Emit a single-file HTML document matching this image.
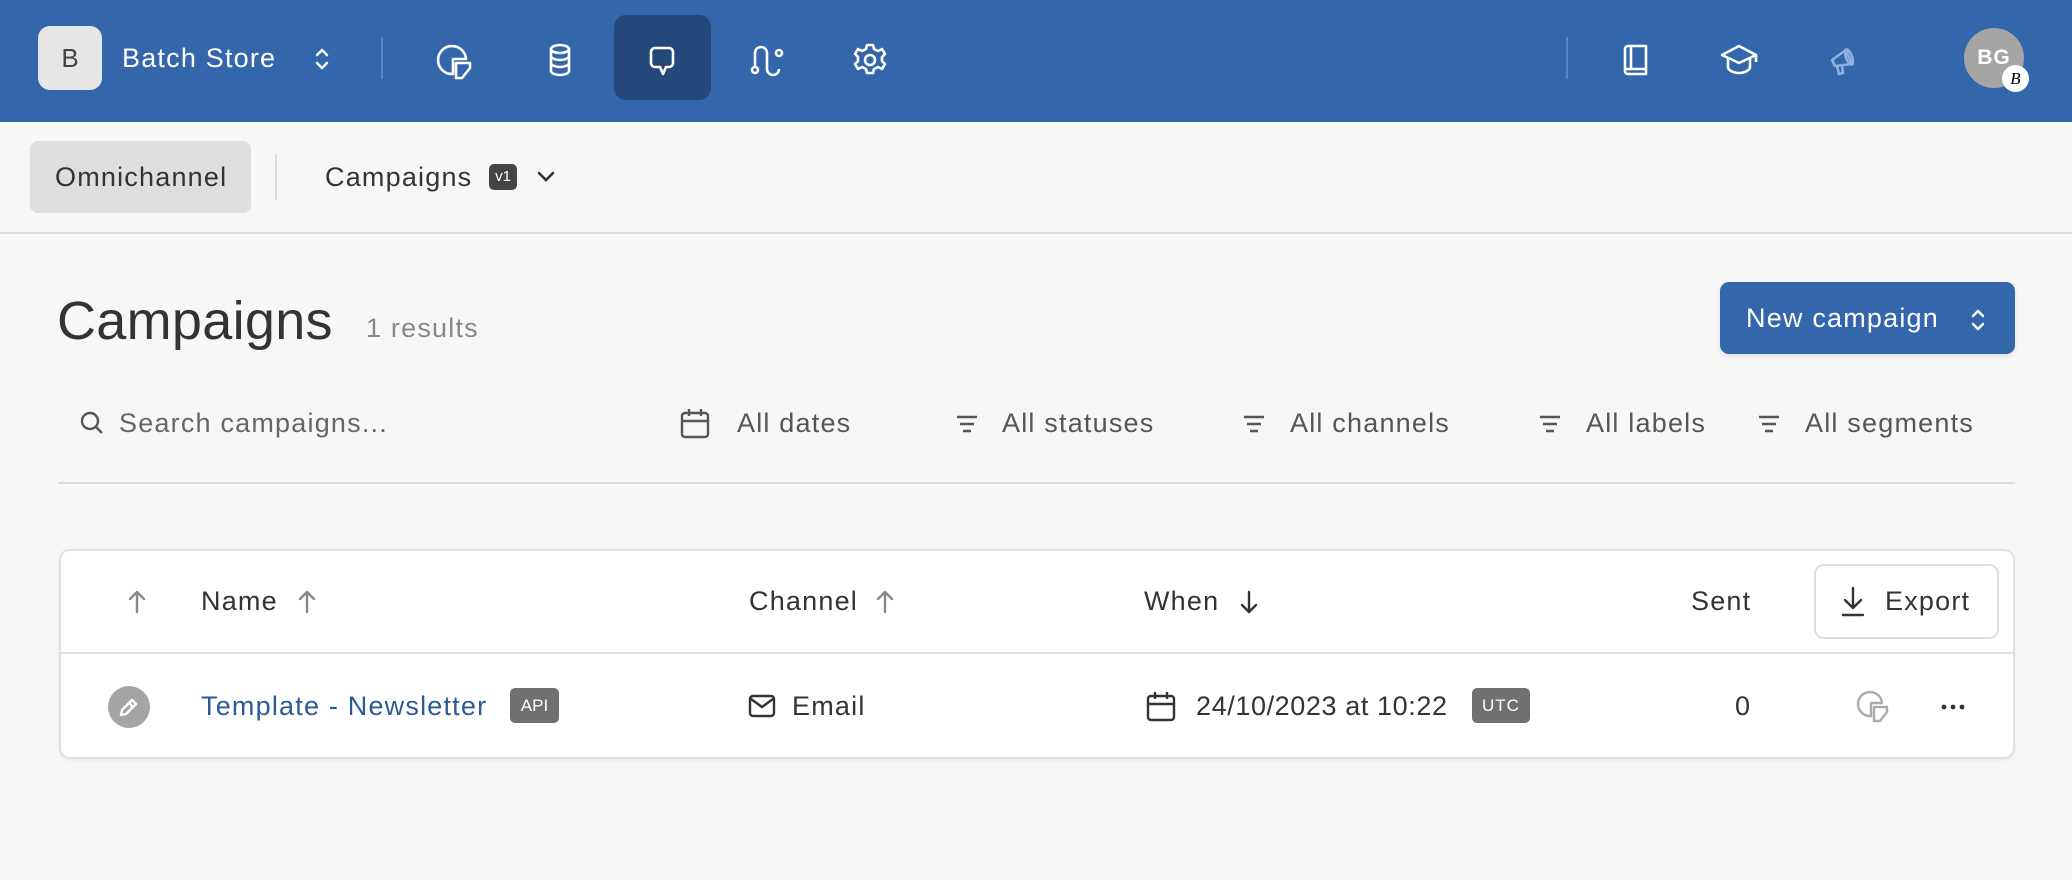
<!DOCTYPE html>
<html><head><meta charset="utf-8"><style>
*{margin:0;padding:0;box-sizing:border-box}
body{width:2072px;height:880px;background:#f7f7f7;font-family:"Liberation Sans",sans-serif;position:relative;overflow:hidden;color:#333}
.a{position:absolute}
.t{position:absolute;white-space:nowrap;line-height:40px;font-size:27px;letter-spacing:1.2px}
svg{position:absolute;overflow:visible}
</style></head><body>
<div class="a" style="left:0;top:0;width:2072px;height:122px;background:#3366aa"></div>
<div class="a" style="left:38px;top:26px;width:64px;height:64px;border-radius:12px;background:#e6e6e6;color:#444;font-size:26px;line-height:64px;text-align:center">B</div>
<div class="t" style="left:122px;top:38px;color:#fff">Batch Store</div>
<svg style="left:313px;top:46px" width="18" height="26" fill="none" stroke="#fff" stroke-width="2.5" stroke-linecap="round" stroke-linejoin="round"><path d="M4 9l5-5 5 5M4 17l5 5 5-5"/></svg>
<div class="a" style="left:381px;top:37px;width:2px;height:42px;background:#5a85c0"></div>
<div class="a" style="left:614px;top:15px;width:97px;height:85px;border-radius:12px;background:#24487a"></div>
<svg style="left:436px;top:42px" width="40" height="40" fill="none" stroke="#fff" stroke-width="2.6" stroke-linejoin="round"><path d="M17 32 A14 14 0 1 1 30 17 L17 17 Z"/><path d="M20 21 H34 V26 L26 36 H20 Z"/></svg>
<svg style="left:548px;top:44px" width="24" height="32" fill="none" stroke="#fff" stroke-width="2.6"><ellipse cx="12" cy="5" rx="9" ry="4"/><path d="M3 5v22c0 2 4 4 9 4s9-2 9-4V5M3 12c0 2 4 4 9 4s9-2 9-4M3 19c0 2 4 4 9 4s9-2 9-4"/></svg>
<svg style="left:648px;top:45px" width="30" height="34" fill="none" stroke="#fff" stroke-width="2.6" stroke-linejoin="round"><path d="M7 3h14a4 4 0 0 1 4 4v11a4 4 0 0 1-4 4h-3l-3 7l-3-7H7a4 4 0 0 1-4-4V7a4 4 0 0 1 4-4z"/></svg>
<svg style="left:750px;top:44px" width="34" height="34" fill="none" stroke="#fff" stroke-width="2.6"><circle cx="5" cy="26" r="3"/><circle cx="29" cy="9" r="3"/><path d="M5 23V9a6 6 0 0 1 12 0v16a6 6 0 0 0 12 0"/></svg>
<svg style="left:852px;top:42px" width="36" height="36" fill="none" stroke="#fff" stroke-width="2.6" stroke-linejoin="round"><circle cx="18" cy="18" r="5"/><path d="M15 3h6l1 4 4 2 4-2 3 5-3 3v4l3 3-3 5-4-2-4 2-1 4h-6l-1-4-4-2-4 2-3-5 3-3v-4l-3-3 3-5 4 2 4-2z"/></svg>
<div class="a" style="left:1566px;top:37px;width:2px;height:42px;background:#5a85c0"></div>
<svg style="left:1622px;top:44px" width="28" height="32" fill="none" stroke="#fff" stroke-width="2.6" stroke-linejoin="round"><path d="M3 26V5a3 3 0 0 1 3-3h18v28H6a3 3 0 0 1-3-3zM3 25h21M9 2v23"/></svg>
<svg style="left:1720px;top:44px" width="38" height="32" fill="none" stroke="#fff" stroke-width="2.6" stroke-linejoin="round"><path d="M19 2L2 11l17 8 17-8zM8 14v9c0 3 5 6 11 6s11-3 11-6v-9M36 11v7"/></svg>
<svg style="left:1829px;top:44px" width="30" height="32" fill="none" stroke="#8fb0dc" stroke-width="2.6" stroke-linejoin="round"><path d="M3 16l14-10 6 14-17 2z M8 22l2 8 4-1-1-7"/><ellipse cx="20" cy="13" rx="3" ry="8" transform="rotate(-20 20 13)"/></svg>
<div class="a" style="left:1964px;top:28px;width:60px;height:60px;border-radius:50%;background:#a5a5a5;color:#fff;font-weight:bold;font-size:21px;line-height:60px;text-align:center;letter-spacing:1px">BG</div>
<div class="a" style="left:2002px;top:65px;width:27px;height:27px;border-radius:50%;background:#fff;color:#000;font-size:17px;line-height:27px;text-align:center;font-style:italic;font-family:'Liberation Serif',serif">B</div>

<div class="a" style="left:30px;top:141px;width:221px;height:72px;border-radius:8px;background:#dedede"></div>
<div class="t" style="left:55px;top:157px;color:#333">Omnichannel</div>
<div class="a" style="left:275px;top:154px;width:2px;height:46px;background:#ddd"></div>
<div class="t" style="left:325px;top:157px;color:#333">Campaigns</div>
<div class="a" style="left:489px;top:164px;width:28px;height:26px;border-radius:5px;background:#444;color:#fff;font-size:15px;line-height:26px;text-align:center">v1</div>
<svg style="left:536px;top:170px" width="20" height="14" fill="none" stroke="#333" stroke-width="2.6" stroke-linecap="round"><path d="M3 3l7 7 7-7"/></svg>
<div class="a" style="left:0;top:232px;width:2072px;height:2px;background:#dcdcdc"></div>

<div class="t" style="left:57px;top:296px;font-size:54px;line-height:50px;letter-spacing:0.3px;color:#333">Campaigns</div>
<div class="t" style="left:366px;top:308px;color:#888">1 results</div>
<div class="a" style="left:1720px;top:282px;width:295px;height:72px;border-radius:9px;background:#3366aa;box-shadow:0 2px 4px rgba(0,0,0,.1)"></div>
<div class="t" style="left:1746px;top:298px;color:#fff">New campaign</div>
<svg style="left:1969px;top:307px" width="18" height="26" fill="none" stroke="#fff" stroke-width="2.5" stroke-linecap="round" stroke-linejoin="round"><path d="M4 9l5-5 5 5M4 17l5 5 5-5"/></svg>

<svg style="left:79px;top:410px" width="26" height="26" fill="none" stroke="#555" stroke-width="2.4"><circle cx="11" cy="11" r="8"/><path d="M17 17l6 6"/></svg>
<div class="t" style="left:119px;top:403px;color:#666">Search campaigns...</div>
<svg style="left:680px;top:408px" width="30" height="32" fill="none" stroke="#555" stroke-width="2.4"><rect x="2" y="5" width="26" height="24" rx="3"/><path d="M2 13h26M9 1v7M21 1v7"/></svg>
<div class="t" style="left:737px;top:403px;color:#555">All dates</div>
<svg style="left:955px;top:414px" width="24" height="20" fill="none" stroke="#555" stroke-width="2.4"><path d="M2 3h20M5 10h14M8 17h8"/></svg>
<div class="t" style="left:1002px;top:403px;color:#555">All statuses</div>
<svg style="left:1242px;top:414px" width="24" height="20" fill="none" stroke="#555" stroke-width="2.4"><path d="M2 3h20M5 10h14M8 17h8"/></svg>
<div class="t" style="left:1290px;top:403px;color:#555">All channels</div>
<svg style="left:1538px;top:414px" width="24" height="20" fill="none" stroke="#555" stroke-width="2.4"><path d="M2 3h20M5 10h14M8 17h8"/></svg>
<div class="t" style="left:1586px;top:403px;color:#555">All labels</div>
<svg style="left:1757px;top:414px" width="24" height="20" fill="none" stroke="#555" stroke-width="2.4"><path d="M2 3h20M5 10h14M8 17h8"/></svg>
<div class="t" style="left:1805px;top:403px;color:#555">All segments</div>
<div class="a" style="left:58px;top:482px;width:1957px;height:2px;background:#dcdcdc"></div>

<div class="a" style="left:59px;top:549px;width:1956px;height:210px;border-radius:11px;background:#fff;border:2px solid #e2e2e2;box-shadow:0 1px 3px rgba(0,0,0,.06)"></div>
<div class="a" style="left:60px;top:652px;width:1954px;height:2px;background:#e2e2e2"></div>
<svg style="left:127px;top:589px" width="20" height="26" fill="none" stroke="#888" stroke-width="2.4" stroke-linecap="round" stroke-linejoin="round"><path d="M10 23V3M3 10l7-7 7 7"/></svg>
<div class="t" style="left:201px;top:581px;color:#333">Name</div>
<svg style="left:297px;top:589px" width="20" height="26" fill="none" stroke="#888" stroke-width="2.4" stroke-linecap="round" stroke-linejoin="round"><path d="M10 23V3M3 10l7-7 7 7"/></svg>
<div class="t" style="left:749px;top:581px;color:#333">Channel</div>
<svg style="left:875px;top:589px" width="20" height="26" fill="none" stroke="#888" stroke-width="2.4" stroke-linecap="round" stroke-linejoin="round"><path d="M10 23V3M3 10l7-7 7 7"/></svg>
<div class="t" style="left:1144px;top:581px;color:#333">When</div>
<svg style="left:1239px;top:589px" width="20" height="26" fill="none" stroke="#333" stroke-width="2.4" stroke-linecap="round" stroke-linejoin="round"><path d="M10 3v20M3 16l7 7 7-7"/></svg>
<div class="t" style="left:1691px;top:581px;color:#333">Sent</div>
<div class="a" style="left:1814px;top:564px;width:185px;height:75px;border-radius:10px;border:2px solid #ddd;background:#fff"></div>
<svg style="left:1840px;top:586px" width="26" height="32" fill="none" stroke="#333" stroke-width="2.4" stroke-linecap="round" stroke-linejoin="round"><path d="M13 2v20M5 14l8 8 8-8M3 29h20"/></svg>
<div class="t" style="left:1885px;top:581px;color:#333">Export</div>

<div class="a" style="left:108px;top:686px;width:42px;height:42px;border-radius:50%;background:#a5a5a5"></div>
<svg style="left:117px;top:695px" width="24" height="24" fill="none" stroke="#fff" stroke-width="2.4" stroke-linejoin="round"><path d="M4 20l1-5L15 5l4 4L9 19z M12 8l4 4"/></svg>
<div class="t" style="left:201px;top:686px;color:#2c5a97">Template - Newsletter</div>
<div class="a" style="left:510px;top:688px;width:49px;height:35px;border-radius:5px;background:#707070;color:#fff;font-size:17px;line-height:35px;text-align:center">API</div>
<svg style="left:748px;top:694px" width="28" height="24" fill="none" stroke="#333" stroke-width="2.4" stroke-linejoin="round"><rect x="2" y="2" width="24" height="20" rx="3"/><path d="M3 5l11 8 11-8"/></svg>
<div class="t" style="left:792px;top:686px;color:#333">Email</div>
<svg style="left:1146px;top:691px" width="30" height="32" fill="none" stroke="#333" stroke-width="2.4"><rect x="2" y="5" width="26" height="24" rx="3"/><path d="M2 13h26M9 1v7M21 1v7"/></svg>
<div class="t" style="left:1196px;top:686px;color:#333;letter-spacing:0.6px">24/10/2023 at 10:22</div>
<div class="a" style="left:1472px;top:688px;width:58px;height:35px;border-radius:5px;background:#707070;color:#fff;font-size:17px;line-height:35px;text-align:center;letter-spacing:1px">UTC</div>
<div class="t" style="left:1735px;top:686px;color:#333">0</div>
<svg style="left:1856px;top:688px" width="40" height="40" fill="none" stroke="#aaa" stroke-width="2.4" stroke-linejoin="round"><path d="M15 28 A12 12 0 1 1 26 15 L15 15 Z"/><path d="M18 19H31V24L24 33H18Z"/></svg>
<svg style="left:1940px;top:703px" width="26" height="8" fill="#333"><circle cx="4" cy="4" r="2.4"/><circle cx="13" cy="4" r="2.4"/><circle cx="22" cy="4" r="2.4"/></svg>
</body></html>
